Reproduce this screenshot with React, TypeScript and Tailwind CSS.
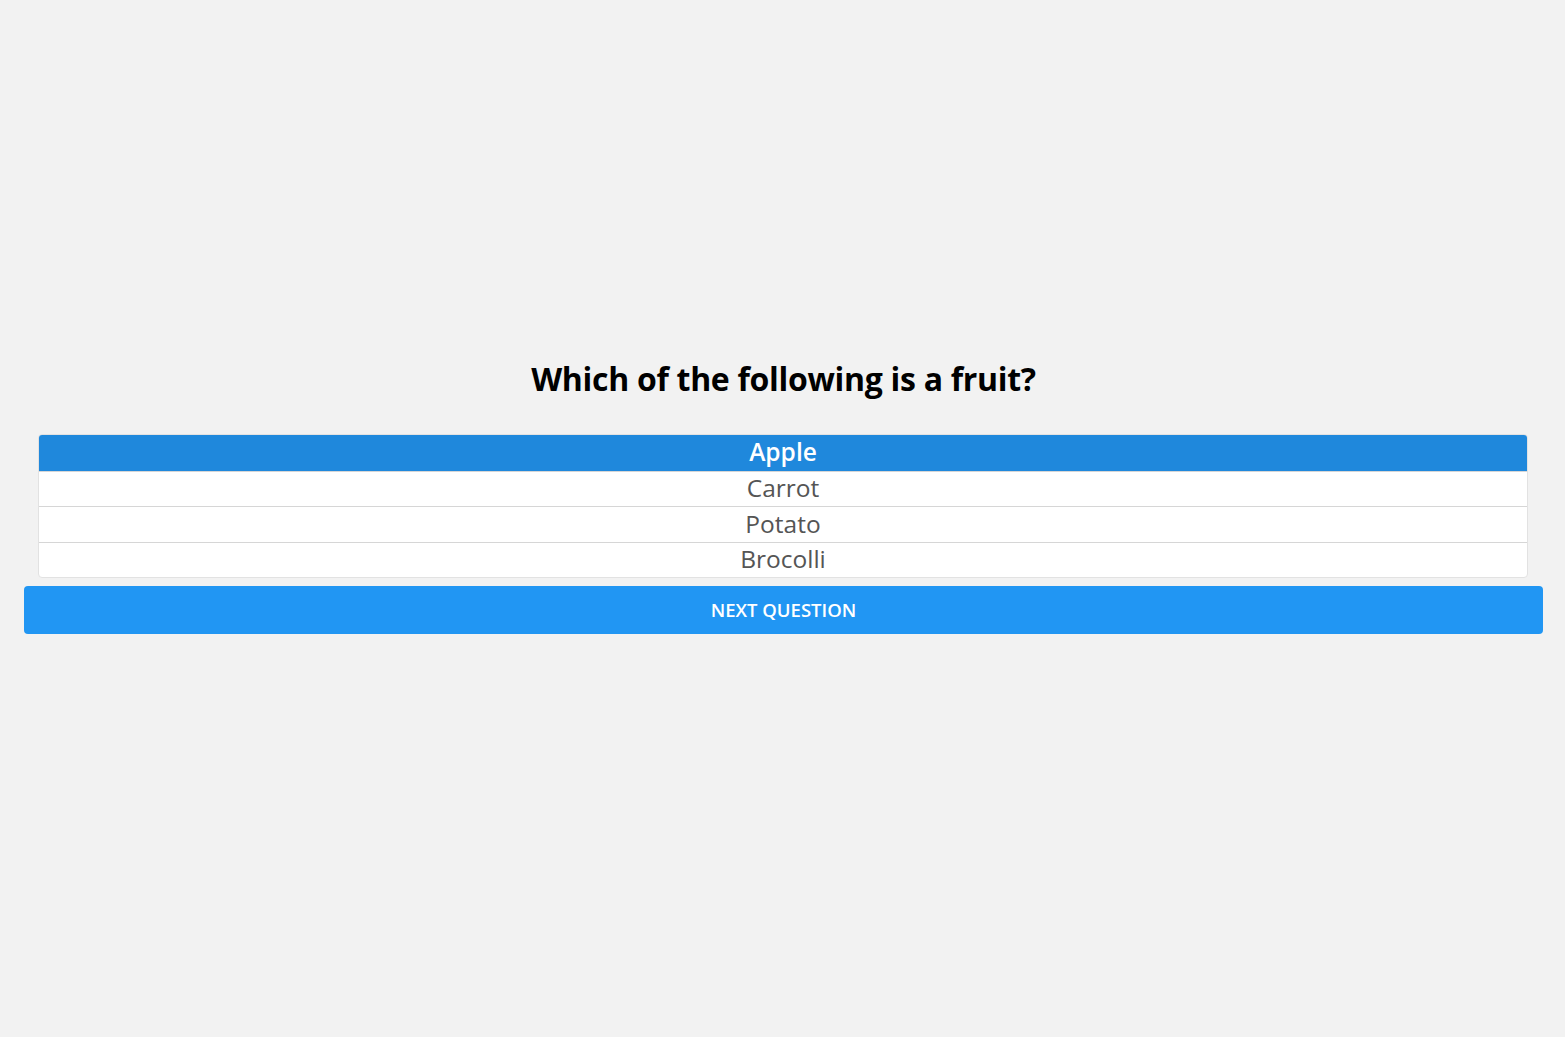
import React, { useState } from "react";

const options = ["Apple", "Carrot", "Potato", "Brocolli"];

export default function App() {
    const [selected, setSelected] = useState(0);

    return (
        <div className="min-h-screen w-full bg-[#f2f2f2] font-['Open_Sans',sans-serif] pt-[356px] pl-[24px] pr-[22px]">
            <h1 className="text-center text-[32px] font-bold leading-[46px] text-black tracking-[-0.3px]">
                Which of the following is a fruit?
            </h1>
            <ul className="ml-[14px] mr-[15px] mt-[32px] rounded-[4px] border border-[#e2e2e2] bg-white overflow-hidden">
                {options.map((opt, i) => (
                    <li
                        key={opt}
                        onClick={() => setSelected(i)}
                        className={`h-[35.5px] flex items-center justify-center text-[24.5px] cursor-pointer ${
                            i > 0 ? "border-t border-[#d6d6d6]" : ""
                        } ${selected === i ? "bg-[#1f88dc] text-white font-semibold" : "text-[#555]"}`}
                    >
                        {opt}
                    </li>
                ))}
            </ul>
            <button className="mt-[8px] w-full h-[48px] rounded-[4px] bg-[#2196f3] text-white text-[18.5px] font-semibold uppercase">
                Next Question
            </button>
        </div>
    );
}
